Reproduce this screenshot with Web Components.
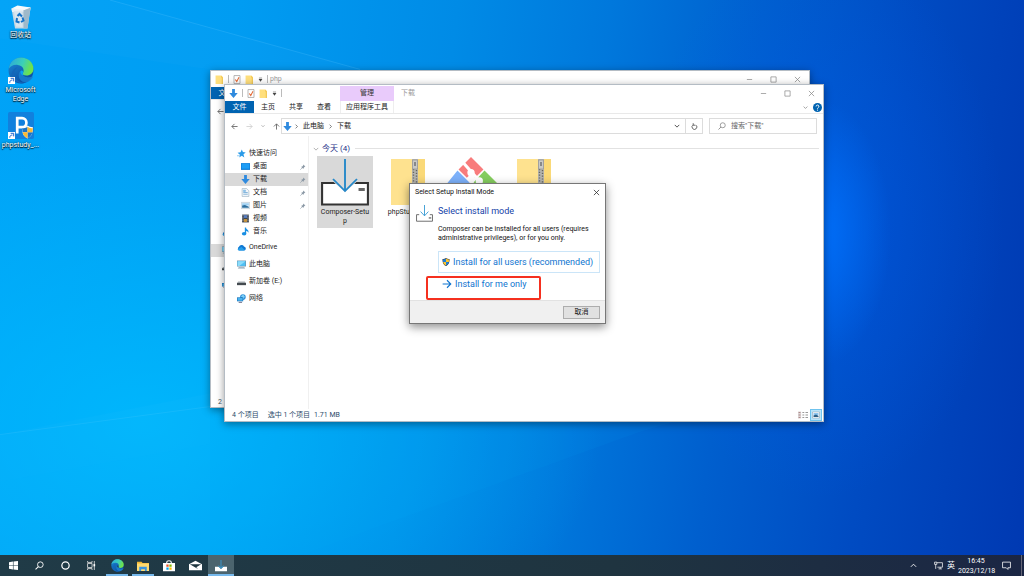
<!DOCTYPE html>
<html lang="zh-CN">
<head>
<meta charset="utf-8">
<title>Desktop</title>
<style>
  html, body { margin: 0; height: 100%; }
  body { font: 7px/9px Roboto, "Noto Sans CJK SC", sans-serif; color: #222; overflow: hidden; }
</style>
</head>
<body>
<desktop-shell>
  <desktop-icon slot="icon" icon="bin" label="回收站"></desktop-icon>
  <desktop-icon slot="icon" icon="edge" label="Microsoft Edge" shortcut></desktop-icon>
  <desktop-icon slot="icon" icon="phpstudy" label="phpstudy_..." shortcut></desktop-icon>

  <explorer-window slot="window" style="left:210px;top:70px" icon="folder" caption="php">
    <back-pane></back-pane>
  </explorer-window>

  <explorer-window slot="window" style="left:224px;top:84px" icon="down" caption="下载" tool="应用程序工具" group="管理">
    <address-bar></address-bar>
    <explorer-body></explorer-body>
  </explorer-window>

  <setup-dialog slot="window" style="left:409px;top:183px"></setup-dialog>

  <task-bar slot="taskbar"></task-bar>
</desktop-shell>

<script>
const ICONS = {
  down: '<path d="M5.500 0h5v7H15.500l-7.500 9L.5 7h5z" fill="#2f8ade"/>',
  folder: '<path d="M1 1h10l3 3v12H1z" fill="#ffdf7d"/><path d="M11 1l3 3v12h-2V5h-1z" fill="#f1c552"/>',
  check: '<path d="M2 1h12v14H2z" fill="#fff" stroke="#a5a5a5" stroke-width="1.500"/><path d="M4.500 8l3 3.500L12 4" fill="none" stroke="#e2622d" stroke-width="2"/>',
  drop: '<path d="M3 2h10v2H3zM2 6h12l-6 9z" fill="#444"/>',
  min: '<path d="M2 8h12" stroke="#888" stroke-width="1.600"/>',
  max: '<path d="M2 2h12v12H2z" fill="none" stroke="#888" stroke-width="1.600"/>',
  close: '<path d="M2 2l12 12M14 2L2 14" stroke="var(--ink,#888)" stroke-width="1.700"/>',
  back: '<path d="M15 8H2M8 2L2 8l6 6" fill="none" stroke="var(--ink,#666)" stroke-width="2"/>',
  fwd: '<path d="M1 8h13M8 2l6 6-6 6" fill="none" stroke="var(--ink,#ccc)" stroke-width="1.800"/>',
  up: '<path d="M8 15V2M2 8l6-6 6 6" fill="none" stroke="#666" stroke-width="2"/>',
  chevDown: '<path d="M2 5l6 6 6-6" fill="none" stroke="var(--ink,#888)" stroke-width="2.400"/>',
  chevUp: '<path d="M2 11l6-6 6 6" fill="none" stroke="#fff" stroke-width="2"/>',
  chevRight: '<path d="M5 2l6 6-6 6" fill="none" stroke="#555" stroke-width="2.400"/>',
  refresh: '<path d="M5 4.500A5.500 5.500 0 1 0 11.500 5M5 .5v4.500h5" fill="none" stroke="#555" stroke-width="2"/>',
  search: '<circle cx="9.500" cy="6.500" r="5" fill="none" stroke="var(--ink,#888)" stroke-width="1.600"/><path d="M6 10l-5 5" stroke="var(--ink,#888)" stroke-width="1.800"/>',
  help: '<circle cx="8" cy="8" r="8" fill="#0063b1"/><path d="M5.500 6.200a2.500 2.500 0 1 1 3.600 2.200c-.8.400-1.100.8-1.100 1.900" fill="none" stroke="#fff" stroke-width="1.600"/><circle cx="8" cy="12.500" r="1.100" fill="#fff"/>',
  star: '<path d="M8.500 1l2 4.500 5 .5-4 3.500 1.500 5.500L8.500 12 4 15l1.200-5L1 6.500l5.300-.8z" fill="#2b9be8"/><path d="M0 12h5" stroke="#7cc2f2" stroke-width="1.500"/>',
  desk: '<path d="M0 2h16v12H0z" fill="#0a78d4"/><path d="M1 3h14v9H1z" fill="#1d9df5"/>',
  doc: '<path d="M2 1h8l4 4v10H2z" fill="#f4f8fb" stroke="#8fa6b8"/><path d="M4 5h5M4 8h8M4 11h8" stroke="#72a9d4" stroke-width="1.500"/><path d="M4 3h4v4H4z" fill="#8cc0e8"/>',
  pics: '<path d="M.5 2.500h15v11H.5z" fill="#eef6fb" stroke="#a9bac6"/><path d="M2 4h12v4H2z" fill="#9fd0f2"/><path d="M2 8l5-1 7 3v2H2z" fill="#2d6f9e"/>',
  video: '<path d="M2 1h12v14H2z" fill="#3b4350"/><path d="M5 2h6v5H5z" fill="#5a7fc0"/><path d="M5 9h6v5H5z" fill="#c9953d"/><path d="M3.500 2v12M12.500 2v12" stroke="#ddd" stroke-width="1" stroke-dasharray="1.500 1.500"/>',
  music: '<ellipse cx="5.500" cy="12" rx="4" ry="3" fill="#1a8fe3"/><path d="M8 1v11" stroke="#1a8fe3" stroke-width="2.400"/><path d="M8 1c1 4 7 4 5 9-1-3-3-3-5-3.500z" fill="#1a8fe3"/>',
  cloud: '<path d="M4 13.500a4 4 0 0 1-.5-7A5 5 0 0 1 12.500 6a3.800 3.800 0 0 1 0 7.500z" fill="#0f78d4"/><path d="M1 10.500l7-3.500 6 5.500-1.500 1H4a3.500 3.500 0 0 1-3-3z" fill="#28a0ea"/>',
  pc: '<path d="M0 1h16v10.500H0z" fill="#6b8ba3"/><path d="M1 2h14v8.500H1z" fill="#4fc0f5"/><path d="M1 2h14L4 10.500H1z" fill="#8bdcfb"/><path d="M3 13h10l1.500 2h-13z" fill="#8aa1b3"/>',
  drive: '<path d="M2 8h12l2 3H0z" fill="#aab0b5"/><path d="M0 10.500h16v4H0z" fill="#444b50"/>',
  net: '<circle cx="10.500" cy="5.500" r="5" fill="#2c8ed8"/><path d="M7 4l4-3 3 4-3 4z" fill="#7fd0f7"/><path d="M0 6h11v7H0z" fill="#1470b8"/><path d="M1 7h9v5H1z" fill="#4bb3ee"/><path d="M3 14h6v1.500H3z" fill="#557"/>',
  pin: '<path d="M9 1.500L14.500 7l-2 .5-3 3-.5 3L2.500 7.500l3-.5 3-3z" fill="#8896a3"/><path d="M5 11l-4 4" stroke="#8896a3" stroke-width="1.800"/>',
  setup: '<path d="M2 25h44v21.500H2z" fill="#fff" stroke="#333" stroke-width="2"/><path d="M13 24l11 10 11-10z" fill="#d9d9d9"/><path d="M24 1v32M12.500 21l11.500 12 11.500-12" fill="none" stroke="#2588c9" stroke-width="1.800"/><path d="M37 30h6v3h-6z" fill="#666"/>',
  setupThin: '<path d="M9 25H1.500v17h45V25H39" fill="#fff" stroke="#666" stroke-width="2.500"/><path d="M24 0v28M13 17l11 11 11-11" fill="none" stroke="#3a9bd4" stroke-width="2.500"/><path d="M36 32h7v3h-7z" fill="#555"/>',
  zip: '<path d="M0 0h22v46H0z" fill="#fee28f"/><path d="M22 0h12v46H22z" fill="#fad978"/><path d="M21 0h6v46h-6z" fill="#b5b5b0"/><path d="M22.500 10v36M25.500 11v36" stroke="#66635a" stroke-width="1.400" stroke-dasharray="1.200 1.600"/><path d="M21.500 1h5v9h-5z" fill="#c9c9c6" stroke="#999" stroke-width=".8"/><path d="M23 3h2v4h-2z" fill="#888"/>',
  git: '<path d="M25 0l12 12-8 8-4-4-4 4-8-8z" fill="#f87c7c"/><path d="M12 13l13 13-8 8-8 8L-1 29z" fill="#7db1fa"/><path d="M38 13l13 13-14 14-12-13z" fill="#85cd5e"/><path d="M18 6l16 18M26 16v16" stroke="#fff" stroke-width="3"/><circle cx="25" cy="15" r="3.500" fill="#fff"/><circle cx="33" cy="23" r="3.500" fill="#fff"/><circle cx="25" cy="28" r="3.500" fill="#fff"/>',
  shield: '<path d="M8 0c2 1.500 4.500 2 7 2 0 7-1 11-7 14C2 13 1 9 1 2c2.500 0 5-.5 7-2z" fill="#333"/><path d="M8 1.500V8H2.200C2 6 2 4.500 2 3c2 0 4-.5 6-1.500zM8 8h5.800c-.6 3-2.200 5.200-5.800 6.800z" fill="#1e7fd8"/><path d="M8 1.500V8h5.800C14 6 14 4.500 14 3c-2 0-4-.5-6-1.500zM8 8H2.200c.6 3 2.200 5.200 5.800 6.800z" fill="#fcc52f"/>',
  listView: '<path d="M0 1h5v14H0z" fill="#dcd6d6"/><path d="M1 3h3M1 8h3M1 13h3" stroke="#b08a8a" stroke-width="2"/><path d="M7 3h3M12 3h4M7 8h3M12 8h4M7 13h3M12 13h4" stroke="#999" stroke-width="2"/>',
  bigView: '<path d="M1 2h14v12H1z" fill="#fff" stroke="#89a"/><path d="M3 4h10v5H3z" fill="#8cc4ee"/><path d="M3 9l5-2 5 3v2H3z" fill="#2c5f86"/>',
  bin: '<path d="M3 7l38-2-6 42H10z" fill="#c8d9e4"/><path d="M3 7l38-2-1 8L4 14z" fill="#e9f1f6"/><path d="M27 9l14-4-6 42h-8z" fill="#9eb9ca"/><path d="M3 7L15 1l26 4-12 5z" fill="#f7fafc"/><path d="M8 12l17 2v30l-13-1z" fill="#d9e6ee"/><path d="M15 22l4-4 5 5M25 25l2 6-5 3M19 35l-6-2 1-7" fill="none" stroke="#1673c8" stroke-width="4"/>',
  edge: '<defs><linearGradient id="g1" x1="0" y1="0" x2="1" y2=".3"><stop offset="0" stop-color="#2aa6de"/><stop offset=".6" stop-color="#3bcfb8"/><stop offset="1" stop-color="#6fe24a"/></linearGradient><linearGradient id="g2" x1="0" y1="0" x2=".6" y2="1"><stop offset="0" stop-color="#1b8bd8"/><stop offset="1" stop-color="#0c4ea2"/></linearGradient></defs><circle cx="24" cy="24" r="23" fill="url(#g2)"/><path d="M1.500 21C3 8 13 1 24 1c13 0 23 9 23 20 0 8-6 12-13 12-5 0-8-2-7-4 4-4 2-14-9-15C10 13 4 17 1.500 21z" fill="url(#g1)"/><path d="M18 18c-6 4-8 12-4 19 3 6 11 10 20 8-4 2-10 3-16 0C7 41 4 30 10 23c2-3 5-5 8-5z" fill="#1466b8"/><path d="M27 29c-1 4 4 7 9 7 4 0 7-1 9-2 1 0 1.500 1 1 2-4 6-9 9-13 9-10 0-16-10-12-18 2-3 6-3 6 2z" fill="var(--cut,#1a7fcf)" opacity=".85"/><path d="M25 24c-3 0-3 7 3 9l-1-4c2-2 1-5-2-5z" fill="var(--hole,#08a3f4)"/>',
  phpstudy: '<path d="M0 3a3 3 0 0 1 3-3h42a3 3 0 0 1 3 3v42a3 3 0 0 1-3 3H3a3 3 0 0 1-3-3z" fill="#1180dd"/><path d="M17 38V11h9a8 8 0 0 1 0 16h-9" fill="none" stroke="#fff" stroke-width="5"/><path d="M36 24c3 2 6 3 10 3 0 10-2 16-10 20-8-4-10-10-10-20 4 0 7-1 10-3z" fill="#fff"/><path d="M36 26v10h-9l-1-7c4 0 7-1 10-3zM36 36h9c-1 5-4 8-9 11z" fill="#1d73c4"/><path d="M36 26v10h9l1-7c-4 0-7-1-10-3zM36 36h-9c1 5 4 8 9 11z" fill="#fbb932"/>',
  shortcut: '<path d="M0 0h16v16H0z" fill="#fff"/><path d="M4 13c0-4 2-6 6-6M6 3h7v7" fill="none" stroke="#1c60c8" stroke-width="2.200"/>',
  win: '<path d="M0 2.200L7 1v6.500H0zM8 .9L16 0v7.500H8zM0 8.500h7V15l-7-1.200zM8 8.500h8V16l-8-1.100z" fill="#fff"/>',
  cortana: '<circle cx="8" cy="8" r="6.500" fill="none" stroke="#fff" stroke-width="2.200"/>',
  taskview: '<path d="M1 4.500h8v7H1zM1 0v2.500h8V0M1 16v-2.500h8V16M13 0v16" fill="none" stroke="#ddd" stroke-width="1.500"/><path d="M11.500 5.500h3v4h-3z" fill="#fff"/>',
  explorer: '<path d="M0 1h6l1.500 2H16v13H0z" fill="#f2b632"/><path d="M0 4h16v12H0z" fill="#ffdb70"/><path d="M3 9h10v7h-2.500v-3h-5v3H3z" fill="#3a94e0"/>',
  store: '<path d="M5 4V2.500C5 .5 11 .5 11 2.500V4" fill="none" stroke="#fff" stroke-width="1.500"/><path d="M0 4h16v11H0z" fill="#fff"/><path d="M4.500 6h3v3h-3z" fill="#f25022"/><path d="M8.500 6h3v3h-3z" fill="#7fba00"/><path d="M4.500 10h3v3h-3z" fill="#00a4ef"/><path d="M8.500 10h3v3h-3z" fill="#ffb900"/>',
  mail: '<path d="M0 6l8-5 8 5v9H0z" fill="#fff"/><path d="M1 6h14l-6 4.500L11 13z" fill="#1f3640"/>',
  setupTask: '<path d="M0 9h16v6H0z" fill="#fff"/><path d="M4 8l4 4 4-4z" fill="#4b646e"/><path d="M8 0v11M4.500 7.500L8 11l3.500-3.500" fill="none" stroke="#3d93c4" stroke-width="1.400"/>',
  monitor: '<path d="M5 3h10v8H6M8 14h6M11 11v3M1 2h4v4H1zM3 6v8" fill="none" stroke="#fff" stroke-width="1.300"/>',
  note: '<path d="M1 2h14v10h-4.500v3l-3-3H1z" fill="none" stroke="#fff" stroke-width="1.400"/>'
};
const BOXES = { setup: '0 0 48 48', setupThin: '0 0 48 44', zip: '0 0 34 46', git: '0 0 50 48', bin: '0 0 44 48', edge: '0 0 48 48', phpstudy: '0 0 48 48' };

/* Attaches an open shadow root with the given styles and markup. */
class Base extends HTMLElement {
  connectedCallback() {
    if (this.shadowRoot) return;
    const t = document.createElement('template');
    t.innerHTML = `<style>*{box-sizing:border-box}button,input{font:inherit;color:inherit;margin:0;padding:0;border:0;background:none;outline:0}${this.css()}</style>${this.html()}`;
    this.attachShadow({ mode: 'open' }).append(t.content.cloneNode(true));
  }
  a(n) { return this.getAttribute(n) || ''; }
}

customElements.define('ui-icon', class extends Base {
  css() { const w = this.a('w') || 8, h = this.a('h') || w; return `:host{display:block;flex:none;width:${w}px;height:${h}px}svg{display:block;width:100%;height:100%}`; }
  html() { const n = this.a('name'); return `<svg viewBox="${BOXES[n] || '0 0 16 16'}" preserveAspectRatio="none" aria-hidden="true">${ICONS[n] || ''}</svg>`; }
});

customElements.define('desktop-wallpaper', class extends Base {
  css() { return `:host{display:block;position:absolute;inset:0;background:
    radial-gradient(ellipse 7% 24% at 80% 42%,rgba(0,115,255,.85),rgba(0,110,255,0)),
    radial-gradient(ellipse 18% 50% at 80% 40%,rgba(0,94,240,.45),rgba(0,94,240,0)),
    radial-gradient(ellipse 45% 55% at 14% 76%,rgba(0,190,255,.75),rgba(0,190,255,0)),
    linear-gradient(97deg,#00a3f7 0%,#009cf2 22%,#008be6 42%,#0078dc 56%,#005fce 70%,#004bc2 84%,#0039b2 100%)}
    svg{display:block;width:100%;height:100%}`; }
  html() { return `<svg viewBox="0 0 1024 576" preserveAspectRatio="none" aria-hidden="true">
    <path d="M110 0L360 72H210L0 40V0z" fill="#fff" opacity=".015"/><path d="M110 0L360 72" stroke="#5cc6ff" opacity=".25"/>
    <path d="M0 451L210 408V576H0z" fill="#fff" opacity=".015"/><path d="M0 451L224 420" stroke="#6cd4ff" opacity=".15"/>
    <path d="M420 422H726L640 448 300 576H0V500z" fill="#00b4ff" opacity=".06"/></svg>`; }
});

customElements.define('desktop-shell', class extends Base {
  css() { return `:host{display:flex;flex-direction:column;height:100vh;overflow:hidden}
    main{position:relative;flex:1;min-height:0}
    .icons{position:relative;display:flex;flex-direction:column;align-items:flex-start;gap:8px;padding-top:5px}
    ::slotted([slot=window]){position:absolute}`; }
  html() { return `<main><desktop-wallpaper></desktop-wallpaper><div class="icons"><slot name="icon"></slot></div><slot name="window"></slot></main><slot name="taskbar"></slot>`; }
});

customElements.define('desktop-icon', class extends Base {
  css() { return `:host{display:block;width:41px;min-height:44px}button{display:flex;flex-direction:column;align-items:center;gap:2px;width:100%}
    .pic{position:relative}.pic ui-icon+ui-icon{position:absolute;left:0;bottom:0}
    span{color:#fff;line-height:9px;text-shadow:0 1px 1px #000,0 0 2px rgba(0,0,0,.8)}`; }
  html() { const bin = this.a('icon') === 'bin'; return `<button><div class="pic"><ui-icon name="${this.a('icon')}" w="${bin ? 22 : 26}" h="${bin ? 24 : 27}"></ui-icon>${this.hasAttribute('shortcut') ? '<ui-icon name="shortcut" w="7"></ui-icon>' : ''}</div><span>${this.a('label')}</span></button>`; }
});

customElements.define('explorer-window', class extends Base {
  css() { return `:host{display:flex;flex-direction:column;width:600px;height:338px;background:#fff;border:1px solid #b4bcc4;box-sizing:border-box;box-shadow:0 2px 8px rgba(0,0,0,.4)}
    header{display:flex;align-items:center;height:16px;color:#999}
    .quick{display:flex;align-items:center;gap:4px;padding-left:4px}
    .quick.wide{width:115px}
    i{width:1px;height:8px;background:#bbb}i:last-child{margin-right:-2px}
    .group{width:54px;height:15px;align-self:flex-end;background:#e9cbfb;color:#333;text-align:center;line-height:15px}
    h1{font:inherit;margin:0;flex:1;padding-left:4px}.group+h1{padding-left:7px}
    .ctl{display:flex}.ctl button{width:24px;display:flex;justify-content:center}
    nav{display:flex;align-items:center;height:13px;border-bottom:1px solid #e9e9e9}
    nav button{width:28px;height:12px;line-height:12px}
    nav .file{width:29px;background:#0063b1;color:#fff}
    nav .tool{width:54px;margin-left:2px;border:solid #eee;border-width:0 1px}
    .end{margin-left:auto;display:flex;align-items:center;gap:5px;padding-right:1px}`; }
  html() { const g = this.a('group'); return `<header><div class="quick ${g ? 'wide' : ''}"><ui-icon name="${this.a('icon')}" w="9"></ui-icon><i></i><ui-icon name="check" w="8" h="9"></ui-icon><ui-icon name="folder" w="9"></ui-icon><ui-icon name="drop" w="5"></ui-icon><i></i></div>
    ${g ? `<div class="group">${g}</div>` : ''}<h1>${this.a('caption')}</h1>
    <div class="ctl"><button aria-label="最小化"><ui-icon name="min" w="7"></ui-icon></button><button aria-label="最大化"><ui-icon name="max" w="7"></ui-icon></button><button aria-label="关闭"><ui-icon name="close" w="7"></ui-icon></button></div></header>
    <nav><button class="file">文件</button>${g ? `<button>主页</button><button>共享</button><button>查看</button><button class="tool">${this.a('tool')}</button>` : ''}<div class="end"><ui-icon name="chevDown" w="5"></ui-icon><ui-icon name="help" w="9"></ui-icon></div></nav><slot></slot>`; }
});

customElements.define('back-pane', class extends Base {
  css() { return `:host{display:flex;flex-direction:column;flex:1;color:#456}
    .nav{padding:8px 6px}.tree{margin-top:104px;display:flex;flex-direction:column;gap:4px;width:90px}
    .tree div{height:13px;padding:2px 0 0 11px}.tree .on{background:#d9d9d9}
    footer{margin-top:auto;padding:0 7px}`; }
  html() { return `<div class="nav"><ui-icon name="back" w="7"></ui-icon></div><div class="tree"><div><ui-icon name="cloud"></ui-icon></div><div class="on"><ui-icon name="pc"></ui-icon></div><div><ui-icon name="drive"></ui-icon></div><div><ui-icon name="net"></ui-icon></div></div><footer>2</footer>`; }
});

customElements.define('address-bar', class extends Base {
  css() { return `:host{display:flex;align-items:center;padding:4px 6px 2px 6px}
    .go{display:flex;align-items:center;width:50px;gap:8px}button{display:flex}
    .box{display:flex;align-items:center;flex:1;height:16px;border:1px solid #dcdcdc;padding-left:1px}
    .box a{color:#222;text-decoration:none;padding:0 4px}
    .drop{margin-left:auto;padding:0 5px}
    .re{width:17px;height:16px;border:1px solid #dcdcdc;border-left:0;align-items:center;justify-content:center}
    label{display:flex;align-items:center;gap:5px;width:108px;height:16px;border:1px solid #dcdcdc;margin-left:6px;padding-left:8px}
    input{flex:1;min-width:0;height:14px}input::placeholder{color:#666;opacity:1}`; }
  html() { return `<div class="go"><button aria-label="后退"><ui-icon name="back" w="7"></ui-icon></button><button aria-label="前进"><ui-icon name="fwd" w="7"></ui-icon></button><button aria-label="最近"><ui-icon name="chevDown" w="4"></ui-icon></button><button aria-label="上移"><ui-icon name="up" w="7"></ui-icon></button></div>
    <div class="box"><ui-icon name="down" w="9"></ui-icon><ui-icon name="chevRight" w="5" style="margin-left:2px"></ui-icon><a href="#pc">此电脑</a><ui-icon name="chevRight" w="5"></ui-icon><a href="#dl">下载</a><button class="drop" aria-label="历史"><ui-icon name="chevDown" w="6" style="--ink:#444"></ui-icon></button></div>
    <button class="re" aria-label="刷新"><ui-icon name="refresh" w="7"></ui-icon></button>
    <label><ui-icon name="search" w="8"></ui-icon><input type="search" aria-label="搜索" placeholder='搜索"下载"'></label>`; }
});

customElements.define('nav-item', class extends Base {
  css() { return `:host{display:block;height:17px}:host([child]),:host([head]){height:13px}
    a{display:flex;align-items:center;gap:3px;height:100%;padding:0 2px 0 12px;color:#222;text-decoration:none}
    :host([child]) a{padding-left:16px}:host([on]) a{background:#d9d9d9}span{flex:1}`; }
  html() { return `<a href="#${this.a('icon')}"><ui-icon name="${this.a('icon')}" w="9"></ui-icon><span><slot></slot></span>${this.hasAttribute('pin') ? '<ui-icon name="pin" w="6"></ui-icon>' : ''}</a>`; }
});

customElements.define('file-tile', class extends Base {
  css() { return `:host{display:block;width:56px;height:72px;flex:none}
    button{display:flex;flex-direction:column;align-items:center;width:100%;height:100%}
    :host([on]) button{background:#d9d9d9}
    .pic{height:52px;display:flex;align-items:center;justify-content:center}
    span{width:52px;line-height:9px;text-align:center;word-break:break-all}`; }
  html() { const [w, h] = { setup: [50, 48], zip: [34, 46], git: [52, 50] }[this.a('icon')]; return `<button><div class="pic"><ui-icon name="${this.a('icon')}" w="${w}" h="${h}"></ui-icon></div><span><slot></slot></span></button>`; }
});

customElements.define('explorer-body', class extends Base {
  css() { return `:host{display:flex;flex-direction:column;flex:1;min-height:0}
    .cols{display:flex;flex:1;min-height:0}
    aside{width:84px;padding-top:11px;border-right:1px solid #f0f0f0}
    .quick{margin-bottom:1px}
    section{flex:1;padding:7px 4px 0 4px}
    h2{display:flex;align-items:center;gap:3px;margin:0;font:8px/11px Roboto,"Noto Sans CJK SC",sans-serif;color:#1e3287;--ink:#aaa}
    h2:after{content:"";flex:1;height:1px;background:#e2e2e2;margin-left:2px}
    .grid{display:flex;gap:7px;padding:2px 0 0 4px}
    footer{display:flex;align-items:center;height:12px;padding-left:7px;color:#2b4a6a}
    footer span{margin-right:9px;padding-top:1px}footer span+span{margin-right:4px}
    .views{margin-left:auto;display:flex;align-items:center;gap:1px;padding-right:1px}
    button{width:12px;height:12px;display:flex;align-items:center;justify-content:center}.views .on{background:#b9e4fa;border:1px solid #6fc3ee}`; }
  html() { return `<div class="cols"><aside><div class="quick"><nav-item head icon="star">快速访问</nav-item><nav-item child pin icon="desk">桌面</nav-item><nav-item child on pin icon="down">下载</nav-item><nav-item child pin icon="doc">文档</nav-item><nav-item child pin icon="pics">图片</nav-item><nav-item child icon="video">视频</nav-item><nav-item child icon="music">音乐</nav-item></div><nav-item icon="cloud">OneDrive</nav-item><nav-item icon="pc">此电脑</nav-item><nav-item icon="drive">新加卷 (E:)</nav-item><nav-item icon="net">网络</nav-item></aside>
    <section><h2><ui-icon name="chevDown" w="6"></ui-icon>今天 (4)</h2><div class="grid"><file-tile on icon="setup">Composer-Setup</file-tile><file-tile icon="zip">phpStudy_64</file-tile><file-tile icon="git"></file-tile><file-tile icon="zip"></file-tile></div></section></div>
    <footer><span>4 个项目</span><span>选中 1 个项目</span><span>1.71 MB</span><div class="views"><button aria-label="详细信息"><ui-icon name="listView" w="10" h="8"></ui-icon></button><button class="on" aria-label="大图标"><ui-icon name="bigView" w="8"></ui-icon></button></div></footer>`; }
});

customElements.define('setup-dialog', class extends Base {
  css() { return `:host{display:block;width:197px;background:#fff;border:1px solid #777;box-sizing:border-box;box-shadow:0 3px 9px rgba(0,0,0,.45);color:#111}
    header{display:flex;align-items:center;justify-content:space-between;height:16px;padding:0 5px;--ink:#222}button{display:flex;align-items:center}
    .main{display:flex;gap:5px;padding:5px 4px 0 6px;height:100px}
    .col{flex:1}h2{margin:0;font-weight:400;font-size:9px;line-height:13px;color:#1642a8}
    p{margin:7px 0 8px}
    .cmd{width:162px;height:22px;padding-left:4px;gap:3px;font-size:9px;line-height:12px;color:#0f74cf;--ink:#0f74cf}
    .first{border:1px solid #cbe5f8;padding-left:3px}
    footer{display:flex;justify-content:flex-end;align-items:center;height:23px;background:#f0f0f0;border-top:1px solid #e2e2e2;padding-right:5px}
    footer button{width:37px;height:13px;justify-content:center;background:#e1e1e1;border:1px solid #adadad}
    .mark{position:absolute;left:16px;top:92px;width:115px;height:24px;border:2px solid #f5301f;border-radius:2px;pointer-events:none}`; }
  html() { return `<header><span>Select Setup Install Mode</span><button aria-label="Close"><ui-icon name="close" w="7"></ui-icon></button></header>
    <div class="main"><ui-icon name="setupThin" w="17" h="17"></ui-icon><div class="col"><h2>Select install mode</h2><p>Composer can be installed for all users (requires administrative privileges), or for you only.</p>
    <button class="cmd first"><ui-icon name="shield" w="8"></ui-icon>Install for all users (recommended)</button><button class="cmd"><ui-icon name="fwd" w="10"></ui-icon>Install for me only</button></div></div>
    <footer><button>取消</button></footer><div class="mark"></div>`; }
});

customElements.define('task-button', class extends Base {
  css() { return `:host{display:block;width:26px;height:21px}button{display:flex;align-items:center;justify-content:center;width:100%;height:100%}
    :host([open]) button{box-shadow:inset 0 -2px #76b9ed}:host([open]){padding:0 2px;box-sizing:border-box}
    :host([on]){padding:0}:host([on]) button{background:#4b646e}`; }
  html() { const w = this.a('w') || 10; return `<button aria-label="${this.a('label')}"><ui-icon name="${this.a('icon')}" w="${w}" h="${this.a('h') || w}"></ui-icon></button>`; }
});

customElements.define('task-bar', class extends Base {
  css() { return `:host{position:relative;display:flex;justify-content:space-between;flex:none;height:21px;background:linear-gradient(90deg,#203b47,#1f3440 60%,#1b2644);color:#fff;--ink:#fff;--hole:#1f3a46}
    div{display:flex;align-items:center}.tray{padding-right:2px}
    .tray button{display:flex}.up{margin-right:17px}.lang{margin:0 3px 0 4px;font-size:8px}
    time{width:36px;text-align:center;line-height:10px;white-space:nowrap;margin:0 8px 0 0}
    .show{width:1px;height:21px;background:#667;margin-left:10px}`; }
  html() { return `<div><task-button icon="win" w="9" label="开始"></task-button><task-button icon="search" w="9" label="搜索"></task-button><task-button icon="cortana" w="9" label="Cortana"></task-button><task-button icon="taskview" w="9" label="任务视图"></task-button><task-button open icon="edge" w="13" label="Edge"></task-button><task-button open icon="explorer" w="12" h="10" label="文件资源管理器"></task-button><task-button icon="store" w="12" label="商店"></task-button><task-button icon="mail" w="13" h="11" label="邮件"></task-button><task-button on open icon="setupTask" w="12" label="Setup"></task-button></div>
    <div class="tray"><button class="up" aria-label="显示隐藏的图标"><ui-icon name="chevUp" w="7"></ui-icon></button><ui-icon name="monitor" w="9"></ui-icon><span class="lang">英</span><time>16:45<br>2023/12/18</time><button aria-label="通知"><ui-icon name="note" w="9"></ui-icon></button><div class="show"></div></div>`; }
});
</script>
</body>
</html>
